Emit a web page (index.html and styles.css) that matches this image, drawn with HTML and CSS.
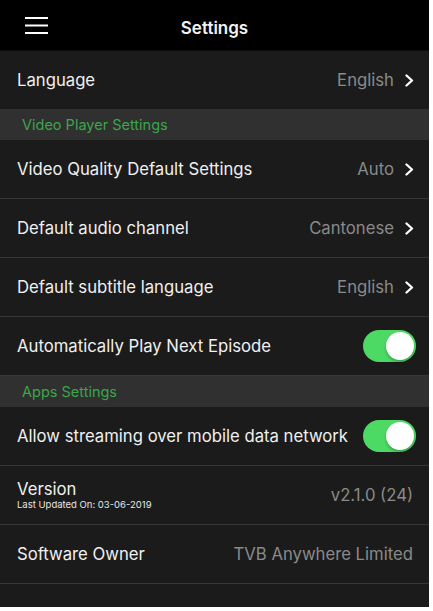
FILE: index.html
```html
<!DOCTYPE html>
<html>
<head>
<meta charset="utf-8">
<link rel="stylesheet" href="styles.css">
</head>
<body>
<div class="app">
  <header class="topbar">
    <svg class="menu" width="23" height="17" viewBox="0 0 23 17">
      <rect x="0" y="0" width="23" height="2" fill="#fff"/>
      <rect x="0" y="7.5" width="23" height="2" fill="#fff"/>
      <rect x="0" y="15" width="23" height="2" fill="#fff"/>
    </svg>
    <div class="title">Settings</div>
  </header>
  <div class="list">
    <div class="row">
      <span class="label">Language</span>
      <span class="value">English</span>
      <svg class="chev" width="9" height="13" viewBox="0 0 9 13"><path d="M1.5 1.5 L7 6.5 L1.5 11.5" fill="none" stroke="#fff" stroke-width="2.3" stroke-linecap="round" stroke-linejoin="round"/></svg>
    </div>
    <div class="section">Video Player Settings</div>
    <div class="row">
      <span class="label">Video Quality Default Settings</span>
      <span class="value">Auto</span>
      <svg class="chev" width="9" height="13" viewBox="0 0 9 13"><path d="M1.5 1.5 L7 6.5 L1.5 11.5" fill="none" stroke="#fff" stroke-width="2.3" stroke-linecap="round" stroke-linejoin="round"/></svg>
    </div>
    <div class="row">
      <span class="label">Default audio channel</span>
      <span class="value">Cantonese</span>
      <svg class="chev" width="9" height="13" viewBox="0 0 9 13"><path d="M1.5 1.5 L7 6.5 L1.5 11.5" fill="none" stroke="#fff" stroke-width="2.3" stroke-linecap="round" stroke-linejoin="round"/></svg>
    </div>
    <div class="row">
      <span class="label">Default subtitle language</span>
      <span class="value">English</span>
      <svg class="chev" width="9" height="13" viewBox="0 0 9 13"><path d="M1.5 1.5 L7 6.5 L1.5 11.5" fill="none" stroke="#fff" stroke-width="2.3" stroke-linecap="round" stroke-linejoin="round"/></svg>
    </div>
    <div class="row">
      <span class="label">Automatically Play Next Episode</span>
      <span class="toggle"><span class="knob"></span></span>
    </div>
    <div class="section">Apps Settings</div>
    <div class="row">
      <span class="label">Allow streaming over mobile data network</span>
      <span class="toggle"><span class="knob"></span></span>
    </div>
    <div class="row">
      <div class="stack">
        <span class="label">Version</span>
        <span class="sub">Last Updated On: 03-06-2019</span>
      </div>
      <span class="value plain">v2.1.0 (24)</span>
    </div>
    <div class="row">
      <span class="label">Software Owner</span>
      <span class="value plain">TVB Anywhere Limited</span>
    </div>
  </div>
</div>
</body>
</html>
```
FILE: styles.css
```css
html, body {
  margin: 0;
  padding: 0;
  background: #ffffff;
}
body {
  font-family: Inter, "Liberation Sans", sans-serif;
  -webkit-font-smoothing: antialiased;
}
.app {
  width: 429px;
  height: 607px;
  background: #1b1b1b;
  overflow: hidden;
  display: flex;
  flex-direction: column;
}
.topbar {
  height: 50px;
  background: #000;
  display: flex;
  align-items: center;
  position: relative;
  border-bottom: 1px solid #0e0e0e;
}
.menu {
  margin-left: 25px;
}
.title {
  position: absolute;
  left: 0;
  right: 0;
  text-align: center;
  color: #f2f2f2;
  font-size: 17px;
  font-weight: 600;
  top: 18px;
  line-height: 20px;
}
.list {
  display: flex;
  flex-direction: column;
}
.row {
  height: 58px;
  display: flex;
  align-items: center;
  padding: 0 15px 0 17px;
  border-bottom: 1px solid #363636;
  background: #1b1b1b;
}
.row:first-child {
  border-bottom: none;
}
.label {
  color: #f0f0f0;
  font-size: 16.7px;
  flex: 1;
  white-space: nowrap;
}
.value {
  color: #8a8a8a;
  font-size: 16.7px;
  margin-right: 11px;
}
.value.plain {
  margin-right: 1px;
}
.chev {
  display: block;
}
.section {
  height: 31px;
  line-height: 31px;
  background: #303030;
  color: #3ba64a;
  font-size: 14.5px;
  padding-left: 22px;
}
.toggle {
  width: 53px;
  height: 32px;
  border-radius: 16px;
  background: #4cd964;
  position: relative;
  margin-right: -2px;
}
.knob {
  position: absolute;
  right: 2px;
  top: 2px;
  width: 28px;
  height: 28px;
  border-radius: 50%;
  background: #fff;
  box-shadow: 0 2px 3px rgba(0,0,0,0.25);
}
.stack {
  flex: 1;
  display: flex;
  flex-direction: column;
}
.stack .label {
  line-height: 20px;
}
.sub {
  color: #e6e6e6;
  font-size: 9.5px;
  line-height: 12px;
}
```
